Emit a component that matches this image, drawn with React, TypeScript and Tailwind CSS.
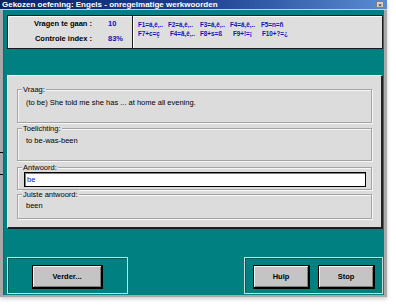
import React from "react";

const Group: React.FC<{ label: string; className?: string; children?: React.ReactNode }> = ({
  label,
  className,
  children,
}) => (
  <div
    className={`relative w-[355px] border border-[#a4a4a4] shadow-[1px_1px_0_#f6f6f6,inset_1px_1px_0_#f6f6f6] ${className ?? ""}`}
  >
    <span className="absolute -top-[5px] left-[4px] px-[1px] bg-[#dcdcdc] leading-[9px] text-[7.5px] text-black">
      {label}
    </span>
    {children}
  </div>
);

const Button: React.FC<{ label: string; className?: string }> = ({ label, className }) => (
  <div
    className={`h-[24px] flex items-center justify-center bg-[#c4c4c4] border border-black border-r-2 border-b-2 shadow-[inset_1px_1px_0_#f2f2f2,inset_-1px_-1px_0_#808080] text-[7.5px] font-bold text-black ${className ?? ""}`}
  >
    {label}
  </div>
);

const keysTop = [
  ["F1=á,é,..", "w-[30px]"],
  ["F2=à,è,..", "w-[32px]"],
  ["F3=â,ê,..", "w-[30px]"],
  ["F4=ä,ë,..", "w-[31px]"],
  ["F5=n=ñ", ""],
];

const keysBottom = [
  ["F7+c=ç", "w-[32px]"],
  ["F4=ã,ê,..", "w-[30px]"],
  ["F8+s=ß", "w-[33px]"],
  ["F9+!=¡", "w-[29px]"],
  ["F10+?=¿", ""],
];

export default function App() {
  return (
    <div className="relative w-[396px] h-[307px] bg-white overflow-hidden font-['Liberation_Sans',Arial,sans-serif]">
      <div className="w-[387px] h-[297px] flex flex-col shadow-[0_2px_4px_rgba(0,0,0,0.2)]">
        {/* title bar */}
        <div className="h-[9px] flex items-center justify-between pl-[2px] pr-[3px] bg-linear-to-r from-[#0a246a] via-[#1e3f8e] to-[#5a8cd2]">
          <span className="text-white font-bold text-[8px] leading-none whitespace-nowrap">
            Gekozen oefening: Engels - onregelmatige werkwoorden
          </span>
          <span className="w-[8px] h-[7px] flex items-center justify-center bg-[#d4d0c8] border border-[#808080] text-[6px] leading-none text-black">
            ×
          </span>
        </div>
        <div className="h-[1px] bg-[#d4d0c8]" />

        {/* body */}
        <div className="flex-1 flex flex-col bg-[#008080] border-l-[3px] border-r-[3px] border-b-[2px] border-[#a8a8a8] shadow-[inset_1px_0_0_#505050]">
          {/* top info panel */}
          <div className="ml-[4px] mt-[5px] w-[376px] h-[34px] flex border border-[#1a1a1a] bg-[#dedede] text-[7.5px] font-bold leading-[9.5px]">
            <div className="w-[125px] border-r border-[#1a1a1a] shadow-[inset_1px_1px_0_#ffffff] pt-[3px] grid grid-cols-[84px_1fr] gap-x-[16px]">
              <span className="text-right text-black">Vragen te gaan :</span>
              <span className="text-[#1010c0]">10</span>
              <span className="text-right text-black">Controle index :</span>
              <span className="text-[#1010c0]">83%</span>
            </div>
            <div className="flex-1 shadow-[inset_1px_1px_0_#ffffff] pl-[5px] pt-[5px] text-[#1010c0] text-[6.3px] leading-[8.5px] whitespace-nowrap">
              <div className="flex">
                {keysTop.map(([k, w]) => (
                  <span key={k} className={w}>
                    {k}
                  </span>
                ))}
              </div>
              <div className="flex">
                {keysBottom.map(([k, w]) => (
                  <span key={k} className={w}>
                    {k}
                  </span>
                ))}
              </div>
            </div>
          </div>

          {/* main panel */}
          <div className="ml-[4px] mt-[26px] w-[376px] h-[154px] flex flex-col pl-[9px] pt-[13px] bg-[#dcdcdc] border border-[#f4f4f4] border-r-[#202020] border-b-[#202020] border-r-2 border-b-2 text-[7.5px] leading-[9px] text-black">
            <Group label="Vraag:" className="h-[34px] pl-[8px] pt-[8px]">
              (to be) She told me she has ... at home all evening.
            </Group>
            <Group label="Toelichting:" className="mt-[5px] h-[33px] pl-[8px] pt-[7px]">
              to be-was-been
            </Group>
            <Group label="Antwoord:" className="mt-[6px] h-[23px] pl-[6px] pt-[4px]">
              <div className="w-[342px] h-[15px] bg-white border border-black shadow-[inset_1px_1px_0_#808080] pl-[2px] flex items-center text-[#1010c0]">
                be
              </div>
            </Group>
            <Group label="Juiste antwoord:" className="mt-[4px] h-[25px] pl-[8px] pt-[6px]">
              been
            </Group>
          </div>

          {/* bottom buttons */}
          <div className="mt-[28px] flex justify-between pl-[4px] pr-[1px]">
            <div className="w-[121px] h-[37px] border border-[#c8dcdc] shadow-[inset_1px_1px_0_#006060] pl-[24px] pt-[7px]">
              <Button label="Verder..." className="w-[71px]" />
            </div>
            <div className="w-[139px] h-[37px] border border-[#c8dcdc] shadow-[inset_1px_1px_0_#006060] pl-[8px] pt-[7px] flex gap-[8px]">
              <Button label="Hulp" className="w-[57px]" />
              <Button label="Stop" className="w-[57px]" />
            </div>
          </div>
        </div>
      </div>

      {/* tick marks on left edge */}
      <div className="absolute left-0 top-[152px] w-[3px] h-[1px] bg-black" />
      <div className="absolute left-0 top-[174px] w-[3px] h-[1px] bg-black" />
    </div>
  );
}
